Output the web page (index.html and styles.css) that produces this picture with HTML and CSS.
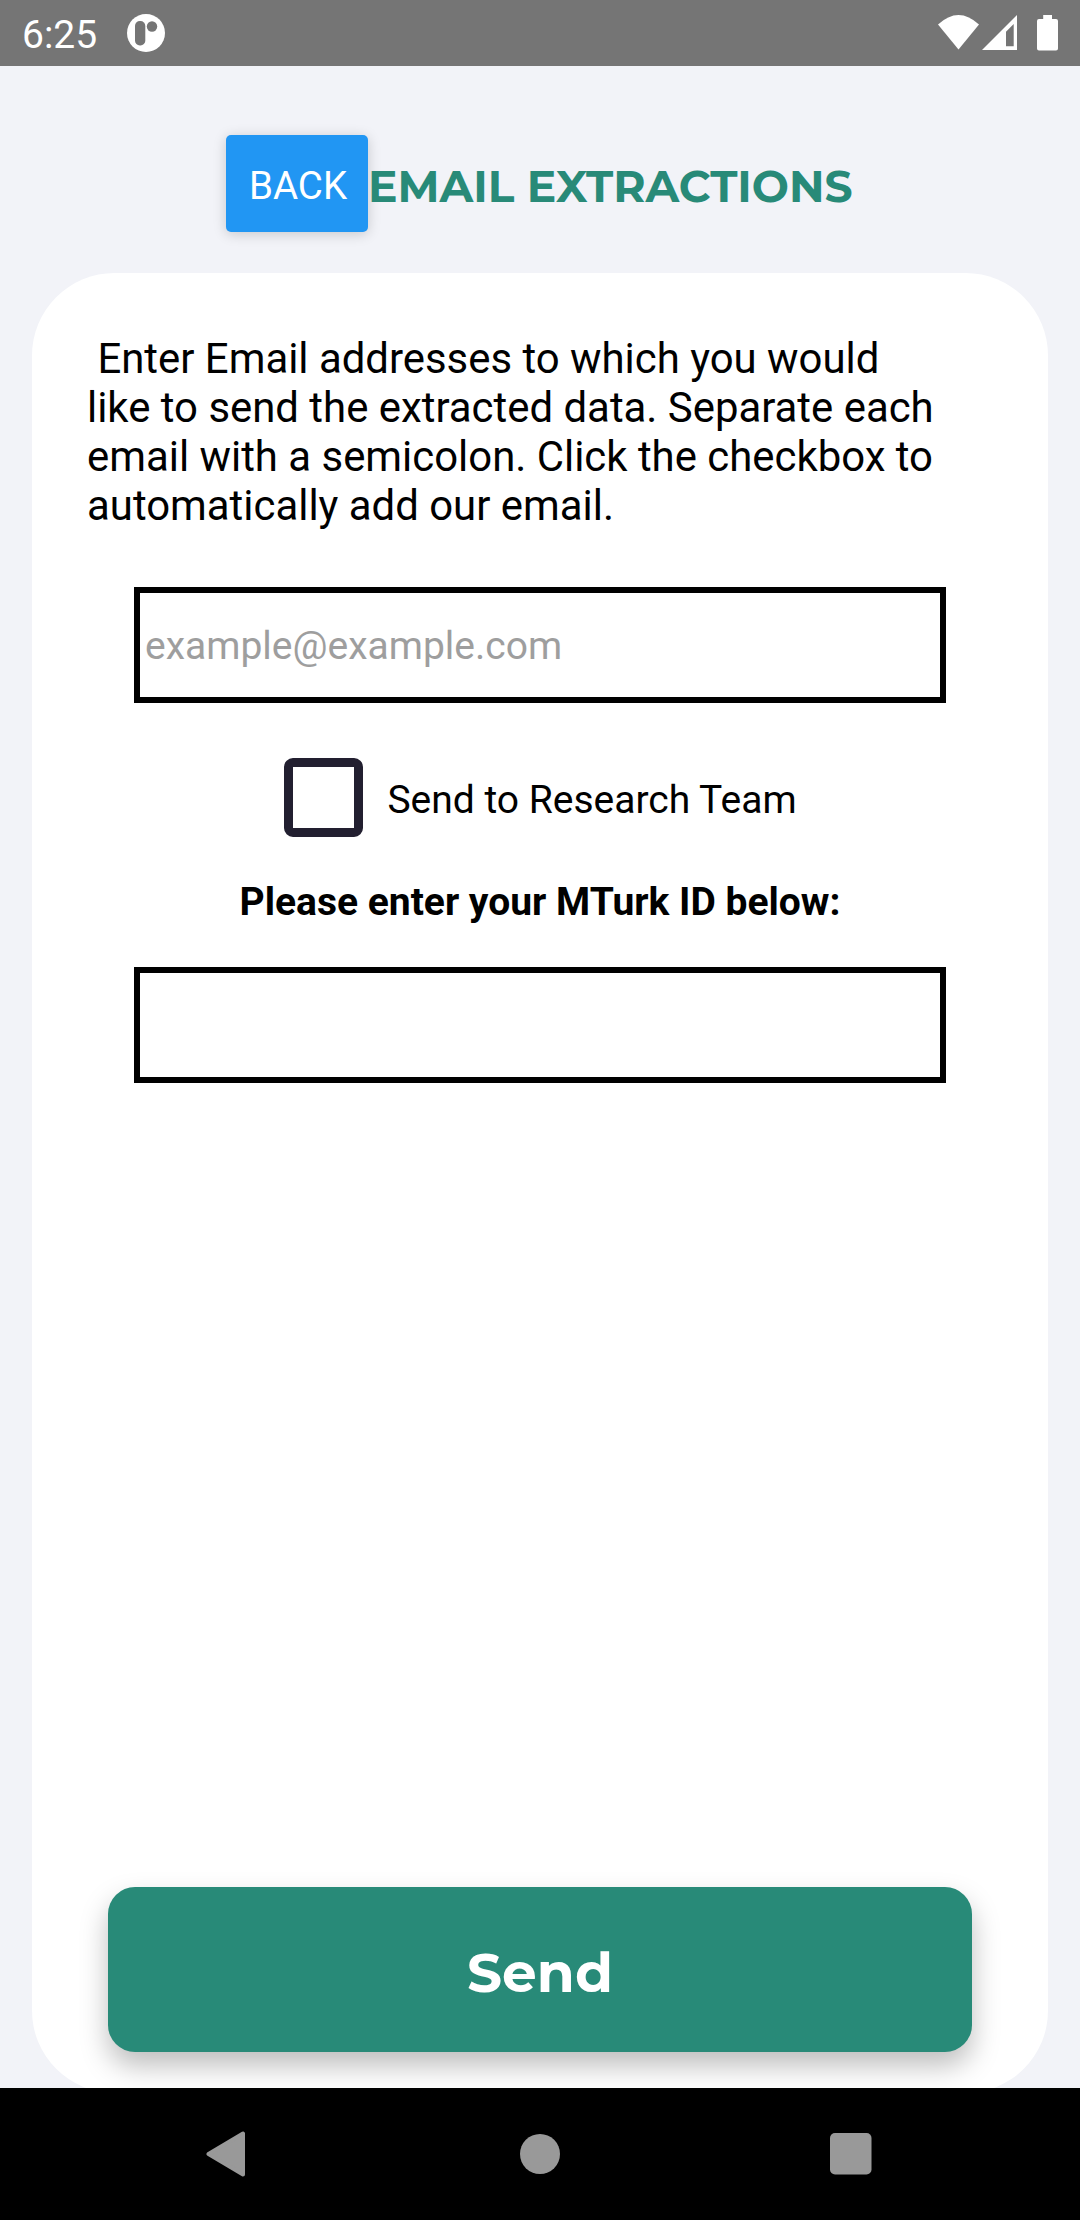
FILE: index.html
```html
<!DOCTYPE html>
<html lang="en">
<head>
<meta charset="utf-8">
<title>Email Extractions</title>
<link rel="stylesheet" href="styles.css">
</head>
<body>
<div class="status">
  <span class="clock">6:25</span>
  <svg class="app-icon" width="38" height="38" viewBox="0 0 38 38">
    <circle cx="19" cy="19" r="19" fill="#fff"/>
    <rect x="8" y="7" width="10.3" height="24.5" rx="4.8" fill="#757575"/>
    <circle cx="25" cy="12.5" r="5.2" fill="#757575"/>
  </svg>
  <svg class="system-icons" width="122" height="38" viewBox="0 0 122 38">
    <g fill="#fff">
      <path d="M0 10.5Q20.500 -8.500 41 10.500L20.500 35.500Z"/>
      <path fill-rule="evenodd" d="M79 1V36H44ZM75.700 10L68 17.700V32.300H75.700Z"/>
      <path d="M105.200 1H114V5H118a2 2 0 0 1 2 2V34.500a2 2 0 0 1-2 2H101a2 2 0 0 1-2-2V7a2 2 0 0 1 2-2H105.200Z"/>
    </g>
  </svg>
</div>
<main class="screen">
  <header class="header">
    <button class="back">BACK</button>
    <h1 class="title">EMAIL EXTRACTIONS</h1>
  </header>
  <section class="card">
    <p class="intro"> Enter Email addresses to which you would
like to send the extracted data. Separate each
email with a semicolon. Click the checkbox to
automatically add our email.</p>
    <input class="field" type="text" placeholder="example@example.com">
    <label class="check"><span class="box"></span><span>Send to Research Team</span></label>
    <p class="prompt">Please enter your MTurk ID below:</p>
    <input class="field" type="text">
    <button class="send">Send</button>
  </section>
</main>
<nav class="nav">
  <svg width="40" height="46" viewBox="0 0 40 46"><path d="M2.500 23L37 2.500V43.500Z" fill="#999" stroke="#999" stroke-width="4" stroke-linejoin="round"/></svg>
  <svg class="home" width="40" height="40" viewBox="0 0 40 40"><circle cx="20" cy="20" r="20" fill="#999"/></svg>
  <svg width="42" height="42" viewBox="0 0 42 42"><rect width="41.500" height="41.500" rx="5" fill="#999"/></svg>
</nav>
</body>
</html>
```
FILE: styles.css
```css
* { box-sizing: border-box; }
body {
  margin: 0;
  width: 1080px;
  height: 2220px;
  display: flex;
  flex-direction: column;
  overflow: hidden;
  background: #f2f3f8;
  color: #000;
  font-family: Roboto, sans-serif;
  font-size: 39px;
}
button, input { font: inherit; border: 0; border-radius: 0; margin: 0; padding: 0; }
svg { display: block; flex: none; }
h1, p { margin: 0; }

.status {
  flex: none;
  height: 66px;
  padding: 0 20px 0 22px;
  display: flex;
  align-items: center;
  background: #757575;
  color: #fff;
}
.clock { width: 105px; padding-top: 3px; }
.system-icons { margin-left: auto; }

.screen {
  height: 2022px;
  flex: none;
  overflow: hidden;
  padding: 69px 32px 0;
}
.header {
  height: 138px;
  padding-left: 194px;
  display: flex;
  align-items: flex-start;
}
.back {
  flex: none;
  width: 142px;
  height: 97px;
  padding: 4px 0 0 2px;
  border-radius: 5px;
  background: #2196f3;
  color: #fff;
  font-size: 38.5px;
  box-shadow: 0 2px 13px rgba(0, 0, 0, .18);
}
.title {
  padding-top: 3px;
  line-height: 97px;
  font-family: Montserrat, Inter, sans-serif;
  font-size: 44px;
  font-weight: 700;
  white-space: nowrap;
  color: #288a78;
}
.card {
  height: 1820px;
  padding-top: 61px;
  border-radius: 82.5px;
  background: #fff;
  display: flex;
  flex-direction: column;
  align-items: center;
}
.intro {
  align-self: flex-start;
  margin-left: 55px;
  font-size: 41.9px;
  line-height: 49px;
  white-space: pre;
}
.field {
  flex: none;
  width: 812px;
  height: 116px;
  padding: 2px 0 0 5px;
  border: 6px solid #000;
  background: #fff;
}
.field::placeholder { color: #9e9e9e; opacity: 1; }
.intro + .field { margin-top: 57px; }
.check {
  height: 79px;
  margin-top: 55px;
  padding-left: 1px;
  display: flex;
  align-items: center;
  gap: 24px;
}
.check span:last-child { padding-top: 5px; }
.box {
  width: 79px;
  height: 79px;
  border: 9px solid #221f30;
  border-radius: 9px;
}
.prompt {
  margin-top: 42px;
  line-height: 46px;
  font-weight: 700;
}
.prompt + .field { margin-top: 42px; }
.send {
  flex: none;
  width: 864px;
  height: 165px;
  margin-top: auto;
  margin-bottom: 41px;
  padding-top: 5px;
  border-radius: 27px;
  background: #288a78;
  color: #fff;
  font-family: Montserrat, Inter, sans-serif;
  font-size: 55px;
  font-weight: 700;
  box-shadow: 0 14px 28px rgba(0, 0, 0, .26);
}
.nav {
  flex: none;
  height: 132px;
  padding: 0 208px 0 206px;
  display: flex;
  align-items: center;
  justify-content: space-between;
  background: #000;
}
.home { margin-left: 4px; }
```
